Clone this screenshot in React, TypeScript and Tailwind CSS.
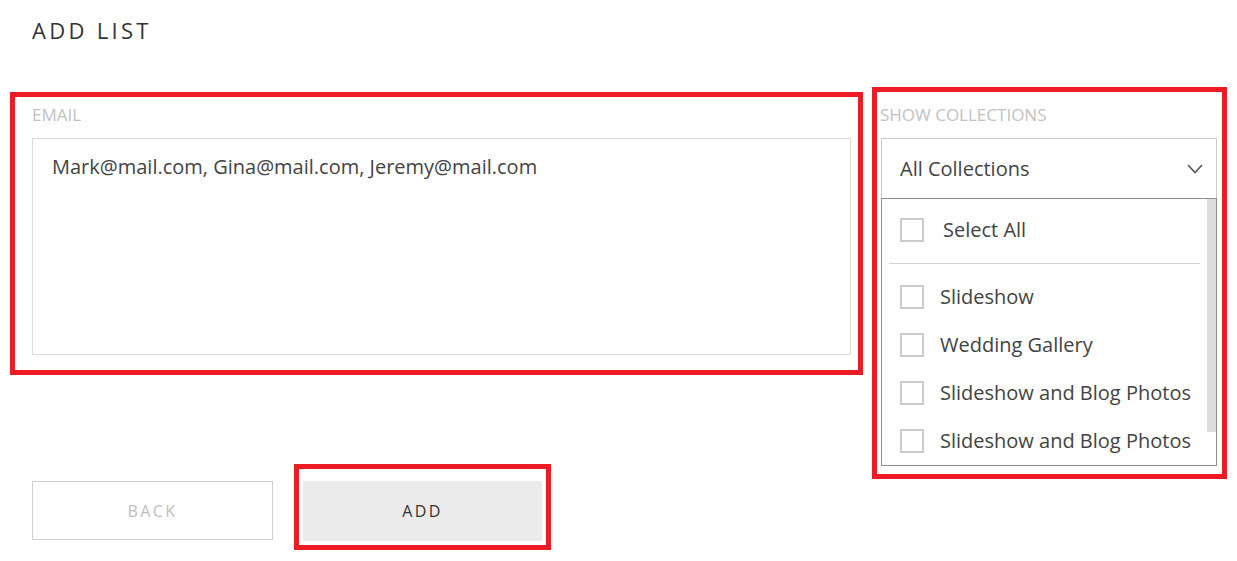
import React from "react";

const collections = ["Slideshow", "Wedding Gallery", "Slideshow and Blog Photos", "Slideshow and Blog Photos"];

function Checkbox() {
  return <span className="block w-[24px] h-[24px] border-2 border-[#cbcbcb] bg-white shrink-0" />;
}

function Chevron() {
  return (
    <svg width="16" height="10" viewBox="0 0 16 10" fill="none">
      <polyline points="1,1 8,8.5 15,1" stroke="#555" strokeWidth="1.6" />
    </svg>
  );
}

export default function App() {
  return (
    <div className="min-h-screen w-full bg-white text-[#434343]" style={{ fontFamily: '"Open Sans", "Liberation Sans", sans-serif' }}>
      <h1 className="pl-[32px] pt-[15px] text-[22px] leading-[30px] tracking-[0.15em] text-[#333] font-normal">ADD LIST</h1>

      <div className="flex items-start mt-[42px]">
        {/* left column */}
        <div className="flex flex-col ml-[10px] mt-[5px]">
          <div className="w-[853px] h-[283px] border-[5px] border-[#ed1c24] pl-[17px] pr-[7px] pt-[6px]">
            <label className="block text-[17px] leading-[24px] text-[#c2c2c2]">EMAIL</label>
            <div className="mt-[11px] h-[217px] border border-[#dcdcdc] px-[19px] pt-[13px] text-[20px] leading-[30px]">
              Mark@mail.com, Gina@mail.com, Jeremy@mail.com
            </div>
          </div>

          <div className="flex items-start mt-[89px]">
            <button className="ml-[22px] mt-[17px] w-[241px] h-[59px] border border-[#d0d0d0] text-[16px] tracking-[0.15em] text-[#c0c0c0]">
              BACK
            </button>
            <div className="ml-[21px] border-[5px] border-[#ed1c24] pt-[12px] pb-[4px] px-[4px]">
              <button className="w-[239px] h-[60px] bg-[#ebebeb] text-[16px] tracking-[0.15em] text-[#333]">ADD</button>
            </div>
          </div>
        </div>

        {/* right column */}
        <div className="ml-[9px] w-[355px] h-[392px] border-[5px] border-[#ed1c24] pl-[4px] pr-[5px] pt-[11px]">
          <label className="block -ml-[1px] text-[17px] leading-[24px] text-[#c2c2c2]">SHOW COLLECTIONS</label>
          <div className="mt-[11px] h-[60px] border border-b-0 border-[#cccccc] flex items-center justify-between pl-[18px] pr-[13px] text-[20px]">
            <span>All Collections</span>
            <Chevron />
          </div>
          <div className="relative h-[268px] overflow-hidden border border-[#8e8e8e]">
            <div className="absolute right-0 top-0 w-[9px] h-[233px] bg-[#dddddd]" />
            <div className="h-[61px] flex items-center pl-[18px] gap-[19px] text-[20px]">
              <Checkbox />
              <span>Select All</span>
            </div>
            <div className="mt-[3px] ml-[7px] w-[311px] h-px bg-[#d4d4d4]" />
            <div className="pt-[9px]">
              {collections.map((c, i) => (
                <div key={i} className="h-[48px] flex items-center pl-[18px] gap-[16px] text-[20px]">
                  <Checkbox />
                  <span>{c}</span>
                </div>
              ))}
            </div>
          </div>
        </div>
      </div>
    </div>
  );
}
